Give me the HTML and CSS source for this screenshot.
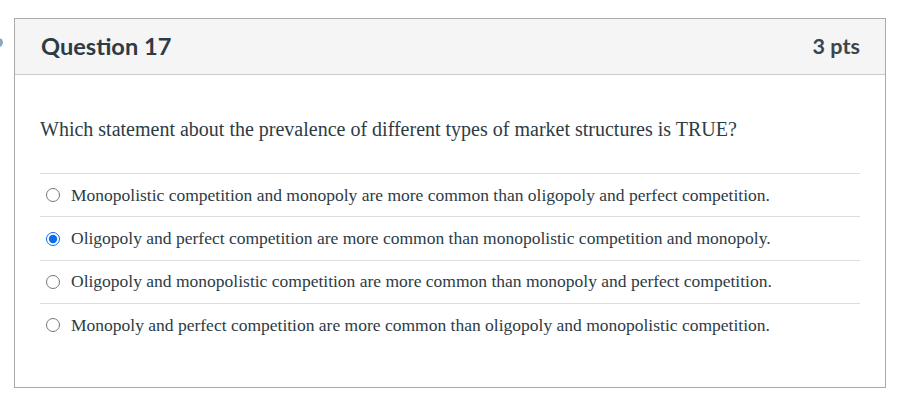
FILE: index.html
```html
<!DOCTYPE html>
<html>
<head>
<meta charset="utf-8">
<link rel="stylesheet" href="styles.css">
</head>
<body>
<span class="marker"></span>
<div class="card">
  <div class="header">
    <h2 class="title">Question 17</h2>
    <span class="pts">3 pts</span>
  </div>
  <div class="body">
    <p class="question">Which statement about the prevalence of different types of market structures is TRUE?</p>
    <div class="answers">
      <label class="answer"><input type="radio" name="q17"><span>Monopolistic competition and monopoly are more common than oligopoly and perfect competition.</span></label>
      <label class="answer"><input type="radio" name="q17" checked><span>Oligopoly and perfect competition are more common than monopolistic competition and monopoly.</span></label>
      <label class="answer"><input type="radio" name="q17"><span>Oligopoly and monopolistic competition are more common than monopoly and perfect competition.</span></label>
      <label class="answer"><input type="radio" name="q17"><span>Monopoly and perfect competition are more common than oligopoly and monopolistic competition.</span></label>
    </div>
  </div>
</div>
</body>
</html>
```

FILE: styles.css
```css
html, body {
  margin: 0;
  padding: 0;
  background: #ffffff;
}
body {
  padding: 18px 15px 0 14px;
  position: relative;
  color: #2d3b45;
}
.marker {
  position: absolute;
  left: -6px;
  top: 38px;
  width: 9px;
  height: 9px;
  border-radius: 50%;
  background: #8aa8bd;
}
.card {
  border: 1px solid #aaaaaa;
  box-sizing: border-box;
  height: 370px;
  width: 872px;
}
.header {
  display: flex;
  justify-content: space-between;
  align-items: center;
  height: 56px;
  box-sizing: border-box;
  background: #f5f5f5;
  border-bottom: 1px solid #c7cdd1;
  padding: 0 25px 2px 26px;
  font-family: Lato, "Noto Sans", sans-serif;
}
.title {
  margin: 0;
  font-size: 23.6px;
  font-weight: 700;
  color: #2d3b45;
}
.pts {
  font-size: 21.6px;
  font-weight: 700;
  color: #3d454c;
}
.body {
  padding: 0 25px;
  font-family: "Liberation Serif", "Times New Roman", serif;
}
.question {
  margin: 0;
  padding-top: 42px;
  height: 56px;
  font-size: 20px;
  line-height: 24px;
  color: #2d3b45;
  border-bottom: 1px solid #dddddd;
}
.answers {
  display: flex;
  flex-direction: column;
}
.answer {
  display: flex;
  align-items: center;
  height: 42.4px;
  border-bottom: 1px solid #dddddd;
  font-size: 17.5px;
  color: #2d3b45;
}
.answer:last-child {
  border-bottom: none;
}
.answer input {
  margin: 0 11px 0 6px;
  width: 14px;
  height: 14px;
  accent-color: #0b6cf0;
}
```
